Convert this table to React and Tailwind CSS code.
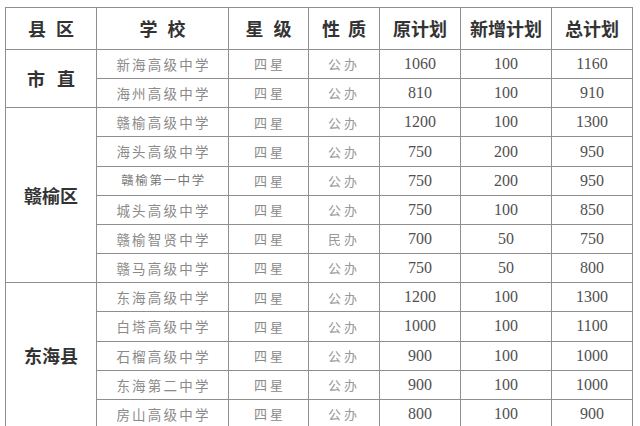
import React from "react";

const cjk = "font-['Noto_Sans_CJK_SC',sans-serif]";
const serif = "font-['Liberation_Serif','Noto_Sans_CJK_SC',serif]";

const groups = [
  {
    name: "市 直",
    rows: [
      ["新海高级中学", "四星", "公办", "1060", "100", "1160"],
      ["海州高级中学", "四星", "公办", "810", "100", "910"],
    ],
  },
  {
    name: "赣榆区",
    rows: [
      ["赣榆高级中学", "四星", "公办", "1200", "100", "1300"],
      ["海头高级中学", "四星", "公办", "750", "200", "950"],
      ["赣榆第一中学", "四星", "公办", "750", "200", "950", true],
      ["城头高级中学", "四星", "公办", "750", "100", "850"],
      ["赣榆智贤中学", "四星", "民办", "700", "50", "750"],
      ["赣马高级中学", "四星", "公办", "750", "50", "800"],
    ],
  },
  {
    name: "东海县",
    rows: [
      ["东海高级中学", "四星", "公办", "1200", "100", "1300"],
      ["白塔高级中学", "四星", "公办", "1000", "100", "1100"],
      ["石榴高级中学", "四星", "公办", "900", "100", "1000"],
      ["东海第二中学", "四星", "公办", "900", "100", "1000"],
      ["房山高级中学", "四星", "公办", "800", "100", "900"],
    ],
  },
];

const spanClass = {
  2: "row-span-2",
  6: "row-span-6",
  5: "row-span-5",
};

const cell = "bg-white flex items-center justify-center";

export default function App() {
  const headers = [
    { t: "县 区", cls: "[word-spacing:6px]" },
    { t: "学 校", cls: "[word-spacing:6px]" },
    { t: "星 级", cls: "[word-spacing:6px]" },
    { t: "性 质", cls: "[word-spacing:4px]" },
    { t: "原计划", cls: "" },
    { t: "新增计划", cls: "" },
    { t: "总计划", cls: "" },
  ];
  return (
    <div className="w-[640px] h-[426px] overflow-hidden bg-white pt-[7px] pl-[5px]">
      <div className="grid grid-cols-[90px_131px_79px_70px_80px_90px_80px] grid-rows-[41px_repeat(13,28.17px)] gap-px p-px bg-[#8e8e8e] w-fit">
        {headers.map((h, i) => (
          <div key={i} className={`${cell} ${cjk} text-[18px] font-semibold text-[#333] ${h.cls}`}>
            {h.t}
          </div>
        ))}
        {groups.map((g, gi) => (
          <React.Fragment key={gi}>
            <div
              className={`${cell} ${spanClass[g.rows.length]} ${cjk} text-[18px] font-bold text-[#333] [word-spacing:8px]`}
            >
              {g.name}
            </div>
            {g.rows.map((r, ri) => (
              <React.Fragment key={ri}>
                <div
                  className={`${cell} ${cjk} text-[#8a8a8a] ${
                    r[6]
                      ? "text-[12.5px] tracking-[1.6px] pl-[2px] text-[#777]"
                      : "text-[13.5px] tracking-[2.2px] pl-[2px]"
                  }`}
                >
                  {r[0]}
                </div>
                <div className={`${cell} ${cjk} text-[13px] tracking-[3px] pl-[3px] text-[#8a8a8a]`}>
                  {r[1]}
                </div>
                <div className={`${cell} ${cjk} text-[13px] tracking-[3px] text-[#999]`}>
                  {r[2]}
                </div>
                <div className={`${cell} ${serif} text-[16px] text-[#505050]`}>{r[3]}</div>
                <div className={`${cell} ${serif} text-[16px] text-[#505050]`}>{r[4]}</div>
                <div className={`${cell} ${serif} text-[16px] text-[#505050]`}>{r[5]}</div>
              </React.Fragment>
            ))}
          </React.Fragment>
        ))}
      </div>
    </div>
  );
}
